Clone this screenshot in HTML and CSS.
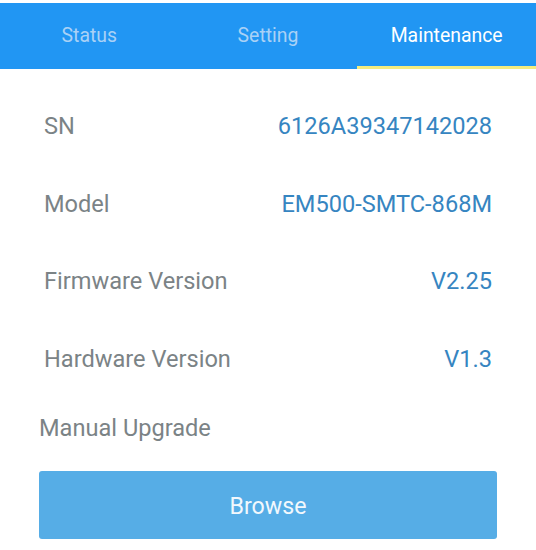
FILE: index.html
```html
<!DOCTYPE html>
<html>
<head>
<meta charset="utf-8">
<link rel="stylesheet" href="styles.css">
</head>
<body>
<div class="page">
  <div class="tabs">
    <div class="tab">Status</div>
    <div class="tab">Setting</div>
    <div class="tab active">Maintenance</div>
  </div>
  <div class="content">
    <div class="row"><span class="label">SN</span><span class="value">6126A39347142028</span></div>
    <div class="row"><span class="label">Model</span><span class="value">EM500-SMTC-868M</span></div>
    <div class="row"><span class="label">Firmware Version</span><span class="value">V2.25</span></div>
    <div class="row"><span class="label">Hardware Version</span><span class="value">V1.3</span></div>
    <div class="manual">Manual Upgrade</div>
    <div class="btn">Browse</div>
  </div>
</div>
</body>
</html>
```
FILE: styles.css
```css
html, body {
  margin: 0;
  padding: 0;
  background: #ffffff;
}
.page {
  width: 536px;
  height: 550px;
  overflow: hidden;
  font-family: Roboto, "Noto Sans", sans-serif;
  padding-top: 3px;
  box-sizing: border-box;
  background: #ffffff;
}
.tabs {
  display: grid;
  grid-template-columns: 1fr 1fr 1fr;
  background: #2196f3;
  height: 66px;
}
.tab {
  color: #a9d1f6;
  font-size: 19.4px;
  text-align: center;
  line-height: 66px;
  box-sizing: border-box;
  border-bottom: 3px solid transparent;
  height: 66px;
}
.tab.active {
  color: #ffffff;
  border-bottom-color: #f5ec7e;
}
.content {
  padding: 19px 44px 0 44px;
}
.row {
  display: flex;
  justify-content: space-between;
  height: 77.6px;
  line-height: 77.6px;
  font-size: 23.6px;
}
.label {
  color: #7b8386;
}
.value {
  color: #3685c1;
}
.manual {
  margin: 15px 0 0 -5px;
  font-size: 23.6px;
  line-height: 30px;
  color: #7b8386;
}
.btn {
  margin: 28px 0 0 -5px;
  width: 458px;
  height: 68px;
  border-radius: 3px;
  background: #56ade6;
  color: #f2f8fd;
  font-size: 23.2px;
  line-height: 70px;
  text-align: center;
}
```
